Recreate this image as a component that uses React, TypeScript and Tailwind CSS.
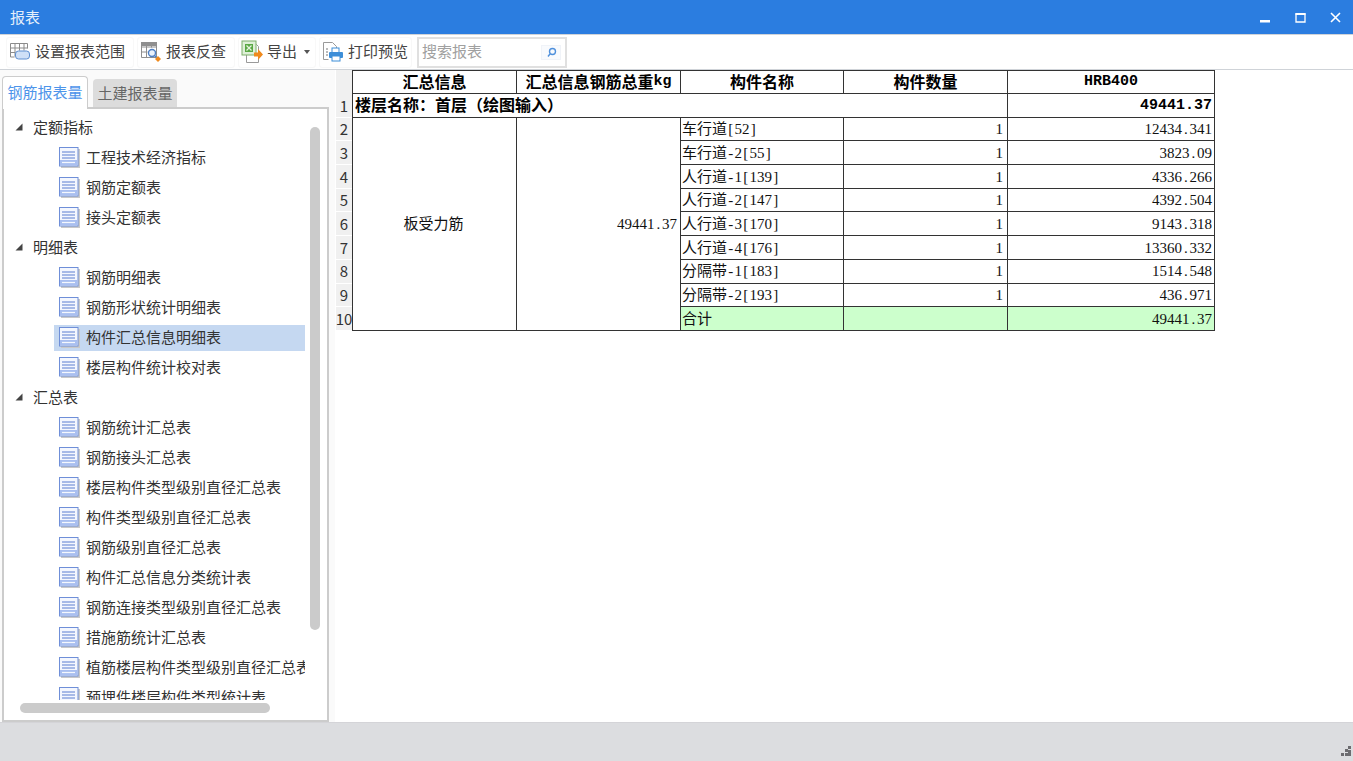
import React from "react";

const sans = "[font-family:'Noto_Sans_CJK_SC','Liberation_Sans',sans-serif]";

function DocIcon() {
  return (
    <svg width="21" height="21" viewBox="0 0 21 21" className="shrink-0">
      <rect x="2" y="2" width="19" height="19" fill="#c9c9c9" />
      <rect x="0.5" y="0.5" width="18.5" height="18.5" fill="#f4f7fe" stroke="#6f8fd8" />
      <rect x="1" y="13" width="17.5" height="5.5" fill="#a9bff0" />
      <path d="M3 5h13M3 8h13M3 11h13" stroke="#5b7ed0" strokeWidth="1.2" />
      <path d="M3 15.5h13" stroke="#f4f7fe" strokeWidth="1.2" />
    </svg>
  );
}

function RangeIcon() {
  return (
    <svg width="22" height="22" viewBox="0 0 22 22" className="shrink-0">
      <path d="M1.5 2.5h17M1.5 7h17M1.5 11.5h5M1.5 16h4M1.5 2.5v13.5M6 2.5v13M10.5 2.5v7M15 2.5v7M18.5 2.5v5" stroke="#8b8b8b" fill="none" />
      <rect x="6.5" y="10" width="14" height="8" rx="3" fill="#cfe0f7" stroke="#5f8fd0" />
    </svg>
  );
}

function ReverseIcon() {
  return (
    <svg width="22" height="22" viewBox="0 0 22 22" className="shrink-0">
      <rect x="1" y="1" width="16" height="4" fill="#8f8f8f" />
      <path d="M1.5 1.5h15v15h-15zM1.5 6h15M1.5 11h6M6.5 1.5v15M11.5 1.5v5" stroke="#8f8f8f" fill="none" />
      <circle cx="12" cy="12" r="3.5" fill="#eaf2fc" stroke="#4d7fc4" strokeWidth="1.4" />
      <path d="M14.5 14.5l2 2" stroke="#4d7fc4" strokeWidth="1.4" />
      <path d="M18 15l3 3-3 3-3-3z" fill="#f08a1d" />
    </svg>
  );
}

function ExportIcon() {
  return (
    <svg width="22" height="24" viewBox="0 0 22 24" className="shrink-0">
      <path d="M5.5 4.5h10l2 2v16h-12z" fill="#fff" stroke="#9a9a9a" />
      <rect x="1" y="1" width="14" height="14" fill="#dff0d8" stroke="#7cae6a" />
      <rect x="4" y="4" width="8" height="8" fill="#5aa845" />
      <path d="M5.5 5.5l5 5M10.5 5.5l-5 5" stroke="#e8f5e0" strokeWidth="1.2" />
      <path d="M13 12.5h4V9l5 5.5-5 5.5v-3.5h-4z" fill="#f08a1d" />
    </svg>
  );
}

function PrintIcon() {
  return (
    <svg width="22" height="22" viewBox="0 0 22 22" className="shrink-0">
      <path d="M1.5 1.5h9l4 4v4M1.5 1.5v17h5" fill="#fff" stroke="#9a9a9a" />
      <path d="M4 8h2M4 11h2M4 14h2" stroke="#777" />
      <rect x="10" y="7" width="7" height="5" fill="#fff" stroke="#3d8ed8" />
      <rect x="7" y="11" width="14" height="6" rx="1" fill="#3d8ed8" />
      <rect x="10" y="15" width="8" height="5" fill="#fff" stroke="#3d8ed8" />
    </svg>
  );
}

function ToolButton({ icon, label, caret, wide }: { icon: React.ReactNode; label: string; caret?: boolean; wide?: boolean }) {
  return (
    <div className={`flex h-[31px] items-center gap-[4px] rounded-[3px] border border-[#f8f8f8] pl-[2px] text-[15px] text-[#444] ${wide ? "pr-[8px]" : "pr-[3px]"}`}>
      {icon}
      <span className="whitespace-nowrap pb-[1px]">{label}</span>
      {caret && <span className="ml-[3px] mr-[2px] h-0 w-0 border-x-[3.5px] border-t-[4px] border-x-transparent border-t-[#555]" />}
    </div>
  );
}

const tree: { group: string; items: string[] }[] = [
  { group: "定额指标", items: ["工程技术经济指标", "钢筋定额表", "接头定额表"] },
  { group: "明细表", items: ["钢筋明细表", "钢筋形状统计明细表", "构件汇总信息明细表", "楼层构件统计校对表"] },
  {
    group: "汇总表",
    items: [
      "钢筋统计汇总表",
      "钢筋接头汇总表",
      "楼层构件类型级别直径汇总表",
      "构件类型级别直径汇总表",
      "钢筋级别直径汇总表",
      "构件汇总信息分类统计表",
      "钢筋连接类型级别直径汇总表",
      "措施筋统计汇总表",
      "植筋楼层构件类型级别直径汇总表",
      "预埋件楼层构件类型统计表",
    ],
  },
];

function Sim({ text }: { text: string }) {
  const parts = text.split(/([.\[\]\-])/);
  return (
    <>
      {parts.map((p, i) =>
        /^[.\[\]\-]$/.test(p) ? (
          <span key={i} className="inline-block w-[7.5px] text-center">{p}</span>
        ) : (
          <span key={i}>{p}</span>
        )
      )}
    </>
  );
}

const cellBase =
  "flex items-center overflow-hidden whitespace-nowrap border-r border-b border-[#333] pt-[1px] text-[15px] text-[#111] [font-family:'Liberation_Serif','Noto_Sans_CJK_SC',serif]";

const boldMono =
  "text-[15px] font-bold text-black [font-family:'Liberation_Mono','Noto_Sans_CJK_SC',monospace]";

function Head({ children }: { children: React.ReactNode }) {
  return (
    <div className={`${cellBase} justify-center border-t text-[16px] font-bold text-black`}>
      {children}
    </div>
  );
}

function RowNum({ n }: { n: number }) {
  return (
    <div className={`flex items-center justify-center border-b border-white bg-[#f0f0f0] pt-[1px] text-[15px] text-[#333] ${sans}`}>
      {n}
    </div>
  );
}

const rows = [
  ["车行道[52]", "12434.341"],
  ["车行道-2[55]", "3823.09"],
  ["人行道-1[139]", "4336.266"],
  ["人行道-2[147]", "4392.504"],
  ["人行道-3[170]", "9143.318"],
  ["人行道-4[176]", "13360.332"],
  ["分隔带-1[183]", "1514.548"],
  ["分隔带-2[193]", "436.971"],
];

export default function App() {
  return (
    <div className={`flex h-[761px] w-[1353px] flex-col overflow-hidden bg-white ${sans}`}>
      <header className="flex h-[34px] shrink-0 items-center justify-between bg-[#2b7de0] pl-[10px] pr-[12px] text-white">
        <span className="text-[15px] text-[#e6effb]">报表</span>
        <div className="flex items-center gap-[24px]">
          <svg width="11" height="11" viewBox="0 0 11 11"><rect x="0" y="8" width="10" height="2.5" fill="#fff" /></svg>
          <svg width="11" height="11" viewBox="0 0 11 11"><path d="M1 2h9v8H1z" fill="none" stroke="#fff" strokeWidth="1.3" /><rect x="0.5" y="1" width="10" height="2" fill="#fff" /></svg>
          <svg width="11" height="11" viewBox="0 0 11 11"><path d="M1 1l9 9M10 1l-9 9" stroke="#fff" strokeWidth="1.6" /></svg>
        </div>
      </header>

      <div className="flex h-[36px] shrink-0 items-center gap-[3px] border-y border-[#cfd3d8] pl-[6px]">
        <ToolButton icon={<RangeIcon />} label="设置报表范围" wide />
        <ToolButton icon={<ReverseIcon />} label="报表反查" wide />
        <ToolButton icon={<ExportIcon />} label="导出" caret />
        <ToolButton icon={<PrintIcon />} label="打印预览" />
        <div className="ml-[2px] flex h-[31px] w-[150px] items-center justify-between border-2 border-[#e0e0e0] pl-[3px] pr-[4px] text-[15px] text-[#a0a0a0]">
          <span className="pb-[1px]">搜索报表</span>
          <span className="flex h-[15px] w-[20px] items-center justify-center border border-[#f0f3f8] bg-[#f8fafd]">
            <svg width="11" height="11" viewBox="0 0 11 11"><circle cx="6.5" cy="4.5" r="3" fill="none" stroke="#4f90dc" strokeWidth="1.4" /><path d="M4 7L2 9.5" stroke="#4f90dc" strokeWidth="1.4" /></svg>
          </span>
        </div>
      </div>

      <div className="flex min-h-0 flex-1">
        <aside className="flex w-[335px] shrink-0 flex-col bg-[#fafafa] pl-[2px] pr-[6px] pt-[6px]">
          <div className="relative z-10 -mb-[2px] flex h-[33px] items-end gap-[5px]">
            <div className="flex h-[33px] w-[86px] items-center justify-center rounded-t-[4px] border-x border-t border-[#ccc] bg-white pb-[1px] text-[15px] text-[#4d94ea]">
              钢筋报表量
            </div>
            <div className="mb-[2px] flex h-[28px] w-[84px] items-center justify-center rounded-t-[4px] bg-[#dcdcdc] text-[15px] text-[#666]">
              土建报表量
            </div>
          </div>
          <div className="relative h-[615px] border-2 border-[#ccc] bg-white">
            <div className="h-[591px] overflow-hidden pt-[3px]">
              {tree.map((g) => (
                <div key={g.group}>
                  <div className="flex h-[30px] items-center text-[15px] text-[#333]">
                    <svg width="8" height="8" viewBox="0 0 8 8" className="ml-[11px] mr-[10px] shrink-0"><path d="M7.5 0.5v7h-7z" fill="#444" /></svg>
                    {g.group}
                  </div>
                  {g.items.map((it) => (
                    <div key={it} className="flex h-[30px] items-start pl-[50px] pt-[3px]">
                      <div
                        className={`flex h-[26px] w-[251px] items-center gap-[6px] overflow-hidden whitespace-nowrap pb-[2px] pl-[5px] text-[15px] text-[#333] ${
                          it === "构件汇总信息明细表" ? "bg-[#c5d8f1]" : ""
                        }`}
                      >
                        <DocIcon />
                        {it}
                      </div>
                    </div>
                  ))}
                </div>
              ))}
            </div>
            <div className="absolute left-[306px] top-[18px] h-[503px] w-[10px] rounded-full bg-[#cbcbcb]" />
            <div className="absolute left-[16px] top-[594px] h-[10px] w-[250px] rounded-full bg-[#cbcbcb]" />
          </div>
        </aside>

        <main className="min-w-0 flex-1 pl-[1px]">
          <div className="grid grid-cols-[16px_165px_164px_163px_164px_207px] grid-rows-[24px_repeat(10,23.7px)]">
            <div className="bg-[#f0f0f0]" />
            <div className={`${cellBase} justify-center border-t border-l text-[16px] font-bold text-black`}>汇总信息</div>
            <Head>汇总信息钢筋总重<span className={`${boldMono} text-[13px]`}>kg</span></Head>
            <Head>构件名称</Head>
            <Head>构件数量</Head>
            <Head><span className={boldMono}>HRB400</span></Head>

            <RowNum n={1} />
            <div className={`${cellBase} col-span-4 border-l pl-[2px] text-[16px] font-bold text-black`}>{"楼层名称\uFF1A首层\uFF08绘图输入\uFF09"}</div>
            <div className={`${cellBase} justify-end pr-[2px]`}><span className={boldMono}>49441.37</span></div>

            {rows.map(([name, weight], i) => (
              <React.Fragment key={name}>
                <RowNum n={i + 2} />
                {i === 0 && (
                  <>
                    <div className={`${cellBase} row-span-9 justify-center border-l pr-[2px]`}>板受力筋</div>
                    <div className={`${cellBase} row-span-9 justify-end pr-[3px]`}><Sim text="49441.37" /></div>
                  </>
                )}
                <div className={`${cellBase} pl-[1px]`}><Sim text={name} /></div>
                <div className={`${cellBase} justify-end pr-[4px]`}>1</div>
                <div className={`${cellBase} justify-end pr-[2px]`}><Sim text={weight} /></div>
              </React.Fragment>
            ))}

            <RowNum n={10} />
            <div className={`${cellBase} bg-[#ccffcc] pl-[1px]`}>合计</div>
            <div className={`${cellBase} bg-[#ccffcc]`} />
            <div className={`${cellBase} justify-end bg-[#ccffcc] pr-[2px]`}><Sim text="49441.37" /></div>
          </div>
        </main>
      </div>

      <footer className="relative h-[39px] shrink-0 border-t border-[#d4d4d8] bg-[#dcdde0]">
        <svg width="12" height="12" viewBox="0 0 12 12" className="absolute bottom-[4px] right-[1px]">
          <path d="M8 1h3v3H8zM5 4h3v3H5zM8 5h3v3H8zM1 8h3v3H1zM5 8h3v3H5zM8 8h3v3H8z" fill="#6c6c70" />
        </svg>
      </footer>
    </div>
  );
}
